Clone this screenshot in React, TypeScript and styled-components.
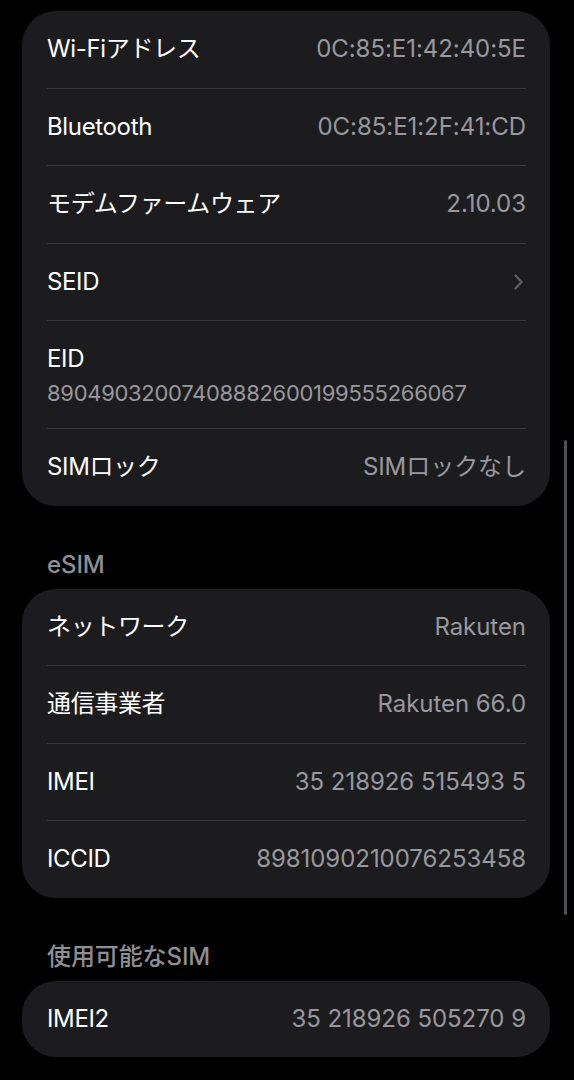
import React from "react";
import styled, { createGlobalStyle } from "styled-components";

const GlobalStyle = createGlobalStyle`
    html, body {
        margin: 0;
        padding: 0;
        background: #000;
    }

    body {
        font-family: Inter, "Noto Sans CJK JP", "Noto Sans", sans-serif;
        -webkit-font-smoothing: antialiased;
    }
`;

type Row = {
    label: string;
    value?: string;
    sub?: string;
    chevron?: boolean;
};

type Section = {
    title?: string;
    rows: Row[];
};

const sections: Section[] = [
    {
        rows: [
            { label: "Wi-Fiアドレス", value: "0C:85:E1:42:40:5E" },
            { label: "Bluetooth", value: "0C:85:E1:2F:41:CD" },
            { label: "モデムファームウェア", value: "2.10.03" },
            { label: "SEID", chevron: true },
            { label: "EID", sub: "89049032007408882600199555266067" },
            { label: "SIMロック", value: "SIMロックなし" },
        ],
    },
    {
        title: "eSIM",
        rows: [
            { label: "ネットワーク", value: "Rakuten" },
            { label: "通信事業者", value: "Rakuten 66.0" },
            { label: "IMEI", value: "35 218926 515493 5" },
            { label: "ICCID", value: "8981090210076253458" },
        ],
    },
    {
        title: "使用可能なSIM",
        rows: [{ label: "IMEI2", value: "35 218926 505270 9" }],
    },
];

const Page = styled.div`
    position: relative;
    min-height: 1080px;
    padding: 11px 24px 30px 22px;
    box-sizing: border-box;
`;

const Group = styled.section`
    & + & {
        margin-top: 44px;
    }
`;

const Header = styled.h2`
    margin: 0 0 9px;
    padding-left: 25px;
    height: 30px;
    line-height: 30px;
    font-size: 24px;
    font-weight: 500;
    color: #8e8e93;
    letter-spacing: -0.1px;
`;

const Card = styled.div`
    background: #1c1c1e;
    border-radius: 34px;
    overflow: hidden;
`;

const Item = styled.div<{ $tall?: boolean }>`
    margin: 0 24px 0 25px;
    min-height: ${({ $tall }) => ($tall ? "0" : "76.5px")};
    display: flex;
    flex-direction: ${({ $tall }) => ($tall ? "column" : "row")};
    align-items: ${({ $tall }) => ($tall ? "flex-start" : "center")};
    justify-content: ${({ $tall }) => ($tall ? "center" : "space-between")};
    gap: ${({ $tall }) => ($tall ? "4px" : "16px")};
    padding: ${({ $tall }) => ($tall ? "23px 0 20px" : "0")};
    box-sizing: content-box;

    & + & {
        border-top: 1px solid #38383a;
    }
`;

const Label = styled.span`
    font-size: 24px;
    line-height: 30px;
    color: #fff;
    letter-spacing: -0.35px;
    white-space: nowrap;
`;

const Value = styled.span`
    font-size: 24px;
    line-height: 30px;
    color: #98989e;
    letter-spacing: -0.05px;
    white-space: nowrap;
`;

const Sub = styled(Value)`
    font-size: 22px;
    letter-spacing: -0.3px;
`;

const Chevron = styled.svg`
    width: 11px;
    height: 18px;
    margin-right: 2px;
`;

const ScrollBar = styled.div`
    position: absolute;
    right: 7px;
    top: 440px;
    width: 3px;
    height: 475px;
    border-radius: 2px;
    background: #505054;
`;

export default function App() {
    return (
        <>
            <GlobalStyle />
            <Page>
                {sections.map(({ title, rows }, i) => (
                    <Group key={i}>
                        {title && <Header>{title}</Header>}
                        <Card>
                            {rows.map(({ label, value, sub, chevron }) => (
                                <Item key={label} $tall={!!sub}>
                                    <Label>{label}</Label>
                                    {value && <Value>{value}</Value>}
                                    {sub && <Sub>{sub}</Sub>}
                                    {chevron && (
                                        <Chevron viewBox="0 0 11 18">
                                            <path
                                                d="M2.5 2.5l6 6.5-6 6.5"
                                                fill="none"
                                                stroke="#5c5c61"
                                                strokeWidth="2.4"
                                                strokeLinecap="round"
                                                strokeLinejoin="round"
                                            />
                                        </Chevron>
                                    )}
                                </Item>
                            ))}
                        </Card>
                    </Group>
                ))}
                <ScrollBar />
            </Page>
        </>
    );
}
